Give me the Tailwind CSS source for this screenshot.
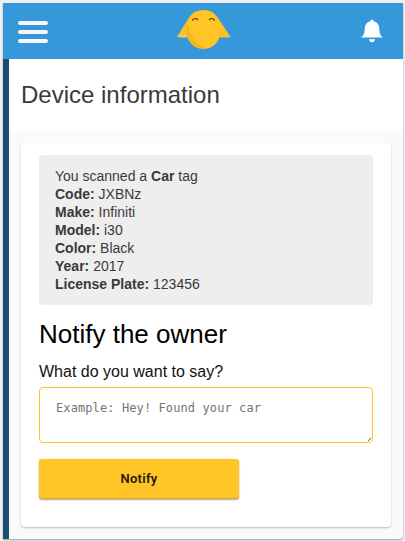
<!DOCTYPE html>
<html lang="en">
<head>
    <meta charset="UTF-8">
    <meta name="viewport" content="width=device-width, initial-scale=1.0">
    <title>Device information</title>
    <script src="https://cdn.jsdelivr.net/npm/@tailwindcss/browser@4"></script>
</head>
<body class="h-screen overflow-hidden bg-[#f0f0f0] p-[3px] pr-[2px] pb-[2px] font-['Liberation_Sans',Arial,sans-serif]">
    <div class="flex h-[536px] w-[400px] flex-col overflow-hidden rounded-br-sm bg-[#fafafa] shadow-[0_1px_2px_rgba(0,0,0,0.35)]">
        <!-- Header -->
        <header class="grid h-14 shrink-0 grid-cols-[1fr_54px_1fr] items-center bg-[#3498db] pr-5 pl-[15px]">
            <button class="mt-0.5 flex w-[30px] flex-col gap-[5px]" aria-label="Menu">
                <span class="h-1 rounded-full bg-[#f4f6f8]"></span>
                <span class="h-1 rounded-full bg-[#f4f6f8]"></span>
                <span class="h-1 rounded-full bg-[#f4f6f8]"></span>
            </button>
            <svg class="-mt-1 ml-[3px] h-10 w-[54px]" viewBox="0 0 54 40">
                <path d="M11.500 9.500L0 27.700Q5 29 12 28L30 20ZM41.500 9.500L53.500 28Q49 29 41 28L30 20Z" fill="#fdc024"/>
                <path d="M.5 27L7 24L12 28Q5 29 0 27.500Z" fill="#ebc95a"/>
                <path d="M26.500 1C19 1 13.500 4.500 11 11C8.500 18 8.500 25 11.500 30.500C14.500 36.500 20 40 26.500 40C33 40 38.500 36.500 41.500 30.500C44.500 25 45 18 42 11C39 4.500 34 1 26.500 1Z" fill="#ffc425"/>
                <path d="M10.500 13C8.500 20 9 26 11.500 30.500C14.500 36.500 20 40 26.500 40C28 40 29 39.800 30 39.500C20 37 12.500 28 10.500 13Z" fill="#f3b722"/>
                <path d="M15.700 11Q18.200 8.200 20.700 10.700M32.300 10.700Q34.800 8.200 37.300 11" fill="none" stroke="#4a3614" stroke-width="1.200" stroke-linecap="round"/>
            </svg>
            <svg class="-mt-px h-6 w-[22px] justify-self-end" viewBox="0 0 22 24" fill="#fff">
                <path d="M11 .7C12.200 .7 12.600 1.400 12.800 2.300C16.500 3.300 18.200 6 18.300 10C18.400 14 19 15.500 21.700 18.500H.3C3 15.500 3.600 14 3.700 10C3.800 6 5.500 3.300 9.200 2.300C9.400 1.400 9.800 .7 11 .7ZM8 20.200H14C13.800 22 12.600 23.200 11 23.200S8.200 22 8 20.200Z"/>
            </svg>
        </header>

        <div class="flex flex-1">
            <!-- Sidebar edge -->
            <div class="w-1.5 shrink-0 bg-[#1b4f72]"></div>

            <main class="flex-1">
                <!-- Page title -->
                <div class="flex h-[72px] items-center bg-white pl-3">
                    <h1 class="text-2xl text-[#3a3a3a]">Device information</h1>
                </div>

                <!-- Device card -->
                <div class="m-3 h-[384px] rounded-sm bg-white px-[18px] py-3 shadow-[0_1px_2px_rgba(0,0,0,0.25)]">
                    <div class="rounded bg-[#eee] px-4 py-3 text-sm leading-[18px] text-[#3a3a3a]">
                        <p>You scanned a <b>Car</b> tag</p>
                        <p><b>Code:</b> JXBNz</p>
                        <p><b>Make:</b> Infiniti</p>
                        <p><b>Model:</b> i30</p>
                        <p><b>Color:</b> Black</p>
                        <p><b>Year:</b> 2017</p>
                        <p><b>License Plate:</b> 123456</p>
                    </div>

                    <!-- Message form -->
                    <h2 class="mt-3 text-[26px] leading-[34px] text-black">Notify the owner</h2>
                    <label for="message" class="mt-[9px] block text-base leading-6 text-[#111]">What do you want to say?</label>
                    <div class="relative mt-[3px]">
                        <textarea
                            id="message"
                            placeholder="Example: Hey! Found your car"
                            class="block h-14 w-full resize-none rounded border border-[#ffc425] bg-white px-4 py-3 font-['DejaVu_Sans_Mono',monospace] text-[12px] leading-4 tracking-[0.1px] placeholder:text-[#757575]"
                        ></textarea>
                        <svg class="absolute right-[2px] bottom-[2px] size-[3px]" viewBox="0 0 3 3" stroke="#555" fill="none">
                            <path d="M0 3L3 0"/>
                        </svg>
                    </div>
                    <button class="mt-4 h-10 w-[200px] rounded-[3px] bg-[#ffc425] font-[Roboto,sans-serif] text-[13px] font-semibold tracking-[0.3px] text-[#1f1a0a] shadow-[inset_0_-1px_0_#d9a824,0_1px_2px_rgba(0,0,0,0.35)]">Notify</button>
                </div>
            </main>
        </div>
    </div>
</body>
</html>
